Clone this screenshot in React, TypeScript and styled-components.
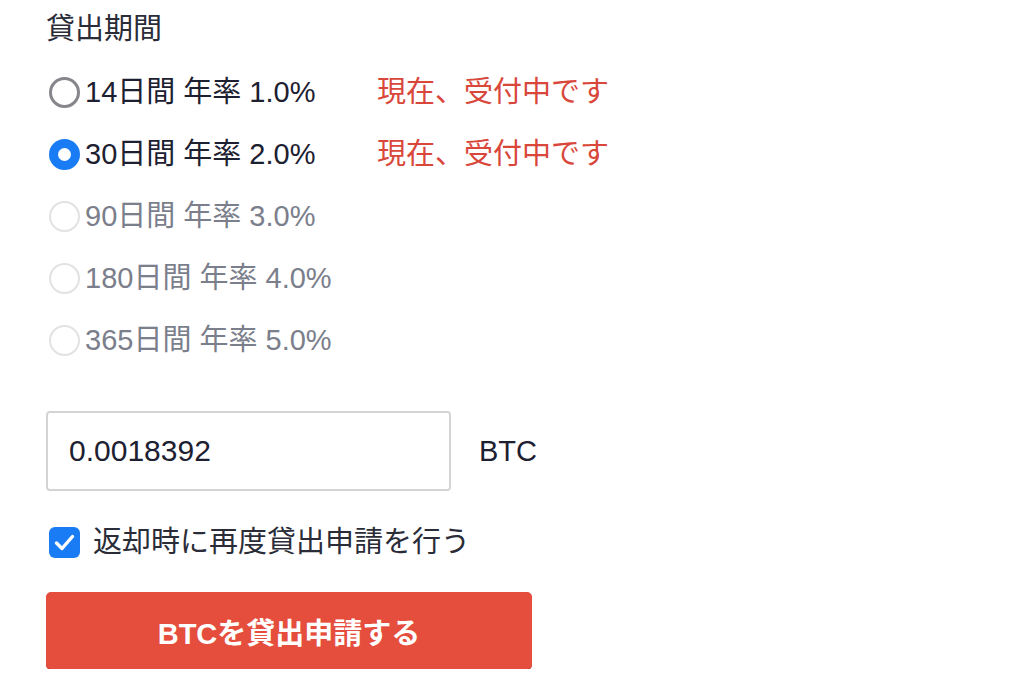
import React from "react";
import styled, { createGlobalStyle } from "styled-components";

const Global = createGlobalStyle`
  html, body { margin: 0; padding: 0; background: #fff; }
  body { font-family: "Liberation Sans", "Noto Sans CJK JP", sans-serif; color: #1d2030; }
`;

const Page = styled.div`
  padding: 9px 0 0 46px;
  width: 600px;
`;

const Title = styled.div`
  font-size: 29px;
  line-height: 40px;
  color: #2a2c38;
  margin-bottom: 12px;
`;

const Options = styled.div`
  display: flex;
  flex-direction: column;
`;

const Row = styled.label<{ $disabled?: boolean }>`
  display: flex;
  align-items: center;
  height: 62px;
  font-size: 29px;
  line-height: 40px;
  color: ${(p) => (p.$disabled ? "#7b7e8b" : "#1d2030")};
`;

const Radio = styled.span<{ $state: "on" | "off" | "disabled" }>`
  box-sizing: border-box;
  width: 31px;
  height: 31px;
  border-radius: 50%;
  margin: 0 5px 0 3px;
  flex: none;
  display: flex;
  align-items: center;
  justify-content: center;
  border: ${(p) =>
    p.$state === "on"
      ? "none"
      : p.$state === "off"
      ? "3px solid #86868c"
      : "2px solid #e2e2e4"};
  background: ${(p) => (p.$state === "on" ? "#1a7cf4" : "#fff")};
  &::after {
    content: "";
    display: ${(p) => (p.$state === "on" ? "block" : "none")};
    width: 13px;
    height: 13px;
    border-radius: 50%;
    background: #fff;
  }
`;

const Label = styled.span`
  width: 292px;
  white-space: nowrap;
`;

const Status = styled.span`
  color: #d9473b;
  white-space: nowrap;
`;

const AmountRow = styled.div`
  display: flex;
  align-items: center;
  gap: 28px;
  margin-top: 40px;
`;

const Input = styled.div`
  box-sizing: border-box;
  width: 405px;
  height: 80px;
  border: 2px solid #d4d4d6;
  border-radius: 4px;
  display: flex;
  align-items: center;
  padding-left: 21px;
  font-size: 30px;
  color: #1d2030;
`;

const Unit = styled.span`
  font-size: 29px;
  color: #1d2030;
`;

const CheckRow = styled.label`
  display: flex;
  align-items: center;
  gap: 13px;
  margin-top: 31px;
  font-size: 29px;
  line-height: 40px;
  color: #2a2c38;
`;

const Check = styled.span`
  width: 31px;
  height: 31px;
  margin-left: 3px;
  border-radius: 6px;
  background: #1a7cf4;
  display: flex;
  align-items: center;
  justify-content: center;
  flex: none;
`;

const Button = styled.button`
  display: block;
  margin-top: 30px;
  width: 486px;
  height: 77px;
  border: none;
  border-radius: 5px;
  background: #e54d3c;
  color: #fff;
  font-family: "Liberation Sans", "Noto Sans CJK JP", sans-serif;
  font-weight: 700;
  font-size: 29px;
  box-shadow: 0 1px 0 #c63a2b;
`;

const periods = [
  { label: "14日間 年率 1.0%", state: "off" as const, open: true },
  { label: "30日間 年率 2.0%", state: "on" as const, open: true },
  { label: "90日間 年率 3.0%", state: "disabled" as const, open: false },
  { label: "180日間 年率 4.0%", state: "disabled" as const, open: false },
  { label: "365日間 年率 5.0%", state: "disabled" as const, open: false },
];

export default function App() {
  return (
    <>
      <Global />
      <Page>
        <Title>貸出期間</Title>
        <Options>
          {periods.map((p) => (
            <Row key={p.label} $disabled={p.state === "disabled"}>
              <Radio $state={p.state} />
              <Label>{p.label}</Label>
              {p.open && <Status>現在、受付中です</Status>}
            </Row>
          ))}
        </Options>
        <AmountRow>
          <Input>0.0018392</Input>
          <Unit>BTC</Unit>
        </AmountRow>
        <CheckRow>
          <Check>
            <svg width="21" height="17" viewBox="0 0 21 17" fill="none">
              <path d="M2.5 9 L8 14.5 L18.5 2.5" stroke="#fff" strokeWidth="3.4" strokeLinecap="round" strokeLinejoin="round" />
            </svg>
          </Check>
          返却時に再度貸出申請を行う
        </CheckRow>
        <Button>BTCを貸出申請する</Button>
      </Page>
    </>
  );
}
